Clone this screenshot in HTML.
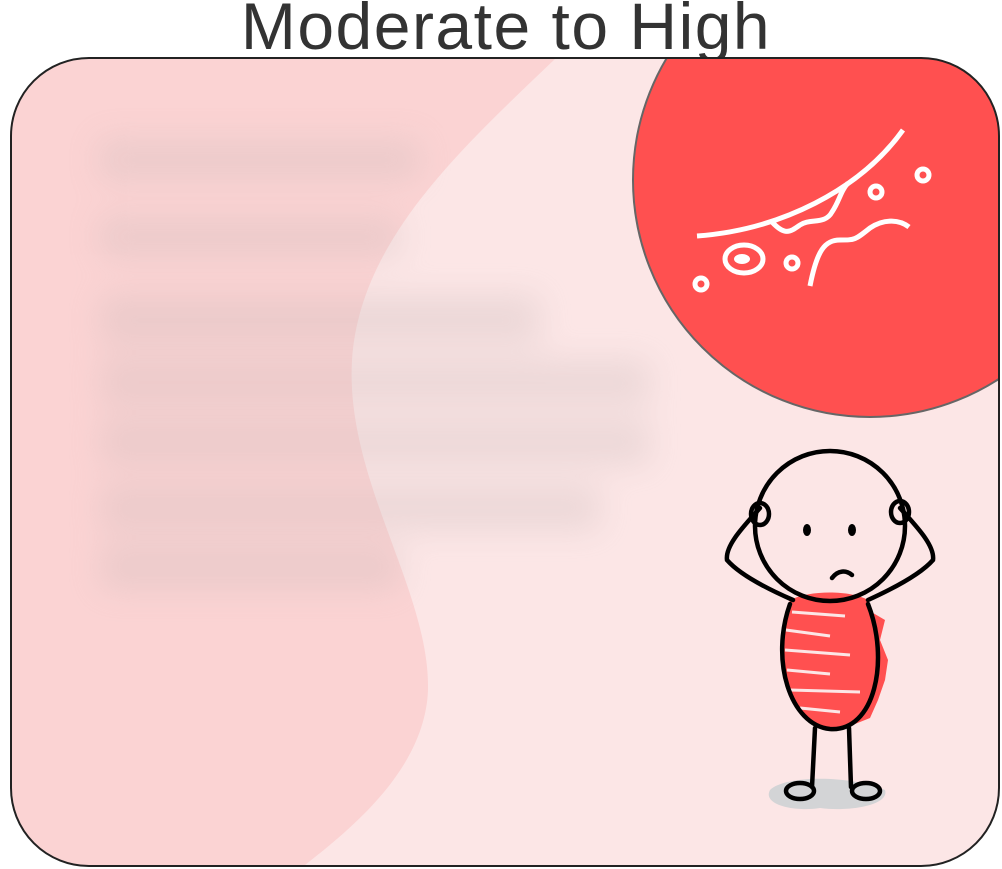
<!DOCTYPE html>
<html><head><style>
body{margin:0;width:1002px;height:869px;background:#fff;overflow:hidden;position:relative;font-family:"Liberation Sans",sans-serif}
.t{position:absolute;left:0;width:1012px;top:-12px;text-align:center;font-size:66px;color:#333;letter-spacing:1.5px}
</style></head><body>
<div class="t">Moderate to High</div>
<svg width="1002" height="869" style="position:absolute;left:0;top:0">
<defs>
<clipPath id="c"><rect x="11" y="58" width="988" height="808" rx="78"/></clipPath>
<filter id="b" x="-30%" y="-100%" width="160%" height="300%"><feGaussianBlur stdDeviation="16"/></filter>
</defs>
<g clip-path="url(#c)">
<rect x="0" y="0" width="1002" height="869" fill="#fce6e6"/>
<path d="M0 58 L556 58 C460 150 360 240 352 360 C345 480 430 590 428 690 C425 770 350 830 300 869 L0 869Z" fill="#fbd3d3"/>
<g filter="url(#b)" fill="#c8b8b8" opacity="0.3">
<rect x="100" y="140" width="320" height="40"/>
<rect x="100" y="217" width="300" height="40"/>
<rect x="100" y="295" width="440" height="50"/>
<rect x="100" y="360" width="550" height="45"/>
<rect x="100" y="420" width="550" height="45"/>
<rect x="100" y="485" width="500" height="45"/>
<rect x="100" y="545" width="300" height="45"/>
</g>
<circle cx="870" cy="180" r="237" fill="#ff5050" stroke="#666" stroke-width="2"/>
<g fill="none" stroke="#fff" stroke-width="5" stroke-linecap="butt">
<path d="M697 236 C780 230 860 190 903 130"/>
<path d="M772 222 C785 236 790 232 800 225 C810 218 825 225 832 212 C840 200 840 192 848 183"/>
<path d="M810 286 C817 250 825 240 840 240 C855 240 855 240 870 228 C885 218 900 220 909 227"/>
<ellipse cx="744" cy="259" rx="19" ry="14"/>
<circle cx="701" cy="284" r="6"/><circle cx="792" cy="263" r="6"/><circle cx="876" cy="192" r="6"/><circle cx="923" cy="175" r="6"/>
</g>
<ellipse cx="742" cy="259" rx="8" ry="5" fill="#fff"/>
<path d="M770 790 C785 775 850 775 885 790 C890 805 850 812 820 808 C795 812 762 805 770 790Z" fill="#d3d4d6"/>
<path d="M790 600 C770 660 790 720 830 728 C875 730 890 660 868 600 C850 590 810 590 790 600Z" fill="#ff5050"/>
<path d="M868 610 L885 620 L880 640 L888 660 L885 680 L878 700 L870 718 L855 724Z" fill="#ff5050"/>
<g stroke="#fce6e6" stroke-width="3" fill="none">
<path d="M792 612 L845 616 M786 630 L830 636 M785 650 L850 655 M787 670 L830 674 M790 690 L860 692 M800 708 L840 712"/>
</g>
<g fill="none" stroke="#000" stroke-width="4.5" stroke-linecap="round">
<circle cx="830" cy="526" r="75"/>
<path d="M790 604 C770 660 790 725 830 729 C875 732 890 660 868 604"/>
<path d="M760 508 C745 525 725 545 727 560 C740 575 770 590 793 600"/>
<path d="M900 508 C915 525 935 545 933 560 C920 575 890 590 868 600"/>
<ellipse cx="760" cy="514" rx="9" ry="11"/><ellipse cx="900" cy="512" rx="9" ry="11"/>
<path d="M815 728 L812 787 M849 728 L851 787"/>
<ellipse cx="800" cy="791" rx="14" ry="8"/><ellipse cx="866" cy="791" rx="14" ry="8"/>
<path d="M832 578 C838 570 846 570 852 575"/>
</g>
<ellipse cx="807" cy="530" rx="4" ry="6"/><ellipse cx="852" cy="530" rx="4" ry="6"/>
</g>
<rect x="11" y="58" width="988" height="808" rx="78" fill="none" stroke="#222" stroke-width="2"/>
</svg>
</body></html>
